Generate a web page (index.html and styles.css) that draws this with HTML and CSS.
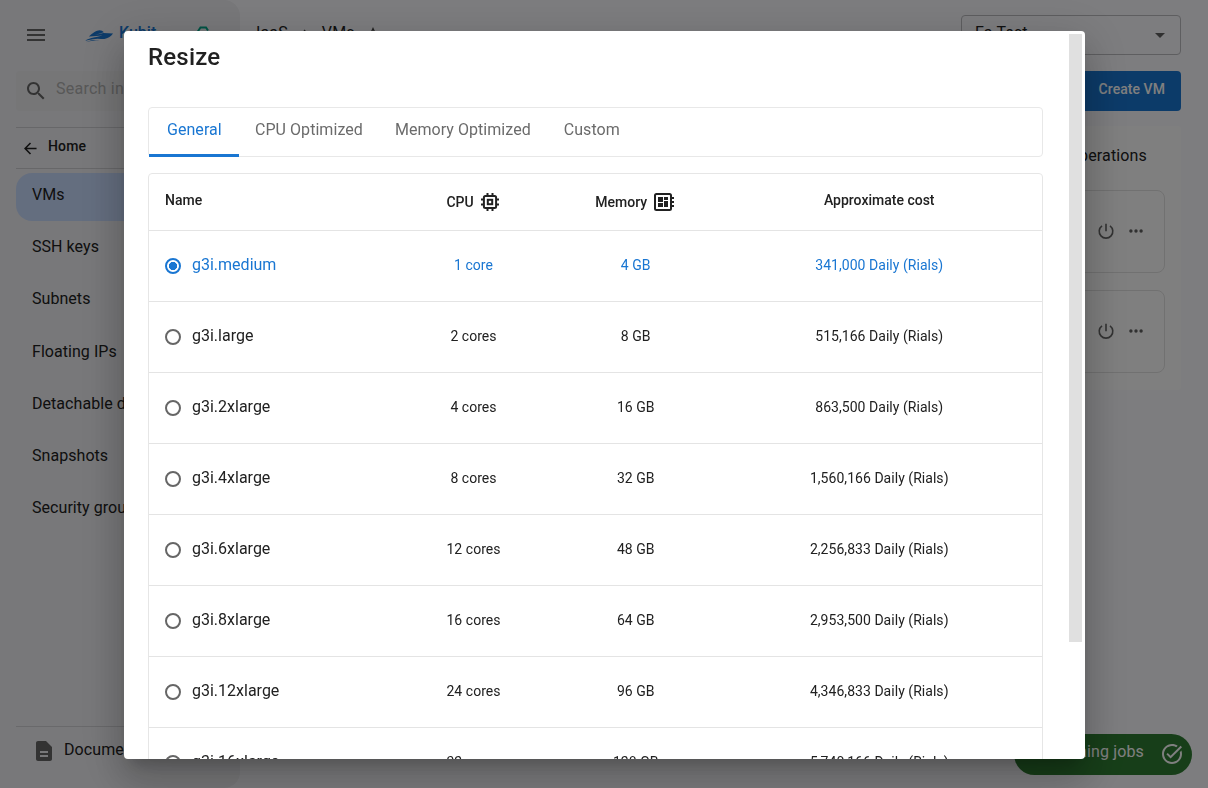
FILE: index.html
```html
<!DOCTYPE html>
<html lang="en">
<head>
<meta charset="utf-8">
<title>Kubit</title>
<link rel="stylesheet" href="styles.css">
</head>
<body>
<div class="app">
  <aside class="sidebar">
    <div class="brand">
      <svg class="menu" viewBox="0 0 24 24"><path d="M3 18h18v-2H3v2zm0-5h18v-2H3v2zm0-7v2h18V6H3z"/></svg>
      <svg class="boat" viewBox="0 0 30 14"><path d="M4 7.500C8 4 12 1 15 1c2 0 3.500.8 4.500 2L10 6l9-2.200 10 .7c-2.500 3.500-5.500 5.200-9 5.500-4 0-8-.8-12 .4L0 12c3-2 6-3 9-3.500 4-.6 6-1 9-2.300-4 .8-8 1-14 1.300z"/><path d="M1 13.500c5-2.500 9-2.500 14-2-5 0-9 .5-14 2z"/></svg>
      <span class="brand-name">Kubit</span>
      <svg class="badge-icon" viewBox="0 0 14 16"><path d="M12 4.500 10 1.500H4.500L1.500 6v5l3 3.500h5l3-3.500V6H5v5h4"/></svg>
    </div>
    <div class="search">
      <svg viewBox="0 0 24 24"><path d="M15.500 14h-.79l-.28-.27C15.410 12.590 16 11.110 16 9.500 16 5.910 13.090 3 9.500 3S3 5.910 3 9.500 5.910 16 9.500 16c1.610 0 3.090-.59 4.230-1.570l.27.28v.79l5 4.990L20.490 19l-4.990-5zm-6 0C7.010 14 5 11.990 5 9.500S7.010 5 9.500 5 14 7.010 14 9.500 11.990 14 9.500 14z"/></svg>
      <span>Search in</span>
    </div>
    <div class="home">
      <svg viewBox="0 0 14 14"><path d="M13.500 7H1.500M7 1 1.200 7 7 13"/></svg>
      <span>Home</span>
    </div>
    <nav class="nav">
      <a class="nav-item active">VMs</a>
      <a class="nav-item">SSH keys</a>
      <a class="nav-item">Subnets</a>
      <a class="nav-item">Floating IPs</a>
      <a class="nav-item">Detachable disks</a>
      <a class="nav-item">Snapshots</a>
      <a class="nav-item">Security groups</a>
    </nav>
    <div class="docs">
      <svg viewBox="0 0 24 24"><path d="M14 2H6c-1.100 0-2 .9-2 2v16c0 1.100.9 2 2 2h12c1.100 0 2-.9 2-2V8l-6-6zm2 16H8v-2h8v2zm0-4H8v-2h8v2z"/></svg>
      <span>Documents</span>
    </div>
  </aside>
  <main class="main">
    <header class="topbar">
      <div class="crumbs">
        <span>IaaS</span>
        <svg class="crumb-sep" viewBox="0 0 8 10"><path d="m2 1 4 4-4 4"/></svg>
        <span>VMs</span>
        <svg class="crumb-up" viewBox="0 0 8 10"><path d="m1 8 3-6.500L7 8"/></svg>
      </div>
      <div class="select"><span>Fa Test</span><svg viewBox="0 0 10 5"><path d="M0 0h10L5 5z"/></svg></div>
    </header>
    <div class="actions"><button class="create">Create VM</button></div>
    <section class="panel">
      <div class="panel-title">Operations</div>
      <div class="vm"><svg class="power" viewBox="0 0 16 16"><path d="M8 .8v7.400M4 2.800a6.800 6.800 0 1 0 8 0"/></svg><svg class="dots" viewBox="0 0 14 4"><circle cx="1.900" cy="2" r="1.700"/><circle cx="7" cy="2" r="1.700"/><circle cx="12.100" cy="2" r="1.700"/></svg></div>
      <div class="vm"><svg class="power" viewBox="0 0 16 16"><path d="M8 .8v7.400M4 2.800a6.800 6.800 0 1 0 8 0"/></svg><svg class="dots" viewBox="0 0 14 4"><circle cx="1.900" cy="2" r="1.700"/><circle cx="7" cy="2" r="1.700"/><circle cx="12.100" cy="2" r="1.700"/></svg></div>
    </section>
  </main>
</div>
<div class="jobs"><span>Running jobs</span><svg viewBox="0 0 24 24"><path d="M22 5.180 10.590 16.600l-4.240-4.240 1.410-1.410 2.830 2.830 10-10L22 5.180zm-2.210 5.040c.13.570.21 1.170.21 1.780 0 4.420-3.580 8-8 8s-8-3.580-8-8 3.580-8 8-8c1.580 0 3.040.46 4.280 1.250l1.440-1.440C16.100 2.670 14.130 2 12 2 6.480 2 2 6.480 2 12s4.480 10 10 10 10-4.480 10-10c0-1.190-.22-2.330-.6-3.390l-1.610 1.610z"/></svg></div>
<div class="backdrop"></div>
<div class="dialog" role="dialog">
  <div class="content">
    <h2 class="title">Resize</h2>
    <div class="tabs">
      <span class="tab selected">General</span>
      <span class="tab">CPU Optimized</span>
      <span class="tab">Memory Optimized</span>
      <span class="tab">Custom</span>
    </div>
    <div class="table">
      <div class="row head">
        <div class="cell">Name</div>
        <div class="cell icon-cell">CPU<svg class="cpu" viewBox="0 0 18 18"><rect x="2.900" y="2.900" width="12.200" height="12.200" rx="1.500"/><rect x="6.800" y="6.800" width="4.400" height="4.400"/><path d="M6.500 0v3M11.500 0v3M6.500 15v3M11.500 15v3M0 6.500h3M0 11.500h3M15 6.500h3M15 11.500h3"/></svg></div>
        <div class="cell icon-cell">Memory<svg class="memory" viewBox="0 0 20 18"><rect x="1" y="1" width="16" height="16" rx="1.500"/><path class="fill" d="M4 4h5v5H4zM10 4h4v3h-4zM4 10h5v4H4zM10 8h4v6h-4z"/><path d="M17 5h3M17 9h3M17 13h3"/></svg></div>
        <div class="cell">Approximate cost</div>
      </div>
      <div class="row chosen"><div class="cell name"><i class="radio"></i>g3i.medium</div><div class="cell">1 core</div><div class="cell">4 GB</div><div class="cell">341,000 Daily (Rials)</div></div>
      <div class="row"><div class="cell name"><i class="radio"></i>g3i.large</div><div class="cell">2 cores</div><div class="cell">8 GB</div><div class="cell">515,166 Daily (Rials)</div></div>
      <div class="row"><div class="cell name"><i class="radio"></i>g3i.2xlarge</div><div class="cell">4 cores</div><div class="cell">16 GB</div><div class="cell">863,500 Daily (Rials)</div></div>
      <div class="row"><div class="cell name"><i class="radio"></i>g3i.4xlarge</div><div class="cell">8 cores</div><div class="cell">32 GB</div><div class="cell">1,560,166 Daily (Rials)</div></div>
      <div class="row"><div class="cell name"><i class="radio"></i>g3i.6xlarge</div><div class="cell">12 cores</div><div class="cell">48 GB</div><div class="cell">2,256,833 Daily (Rials)</div></div>
      <div class="row"><div class="cell name"><i class="radio"></i>g3i.8xlarge</div><div class="cell">16 cores</div><div class="cell">64 GB</div><div class="cell">2,953,500 Daily (Rials)</div></div>
      <div class="row"><div class="cell name"><i class="radio"></i>g3i.12xlarge</div><div class="cell">24 cores</div><div class="cell">96 GB</div><div class="cell">4,346,833 Daily (Rials)</div></div>
      <div class="row"><div class="cell name"><i class="radio"></i>g3i.16xlarge</div><div class="cell">32 cores</div><div class="cell">128 GB</div><div class="cell">5,740,166 Daily (Rials)</div></div>
    </div>
  </div>
  <div class="scrollbar"></div>
</div>
</body>
</html>
```
FILE: styles.css
```css
* { box-sizing: border-box; }
body {
  margin: 0;
  height: 788px;
  overflow: hidden;
  background: #fbfbff;
  color: #212121;
  font-family: Roboto, "Liberation Sans", sans-serif;
  font-size: 16px;
  letter-spacing: 0.15px;
}
svg { display: block; flex: none; overflow: visible; }
.app { display: flex; height: 788px; }

.sidebar {
  display: flex;
  flex-direction: column;
  flex: none;
  width: 240px;
  padding: 0 16px;
  background: #f0f0f4;
  border-radius: 0 16px 16px 0;
}
.brand { display: flex; align-items: center; height: 71px; padding: 0 0 2px 8px; }
.menu { width: 24px; height: 24px; fill: #666; }
.boat { width: 29px; height: 14px; margin: 2px 0 0 37px; fill: #1976d2; }
.brand-name { margin: -4px 0 0 5px; font-weight: 500; color: #1976d2; letter-spacing: 0; }
.badge-icon { width: 14px; height: 16px; margin: -1px 0 0 40px; fill: none; stroke: #00a88a; stroke-width: 2; }
.search {
  display: flex;
  align-items: center;
  flex: none;
  height: 40px;
  padding-left: 8px;
  border-radius: 4px;
  background: #ececee;
  color: #b0b0b0;
}
.search svg { width: 24px; height: 24px; fill: #666; }
.search span { margin: -5px 0 0 8px; letter-spacing: 0.25px; }
.home {
  display: flex;
  align-items: center;
  flex: none;
  height: 42px;
  margin-top: 16px;
  padding-left: 8px;
  border-top: 1px solid #cfcfd3;
  border-bottom: 1px solid #cfcfd3;
  font-size: 14px;
  font-weight: 500;
}
.home svg { width: 13px; height: 13px; fill: none; stroke: #212121; stroke-width: 1.700; }
.home span { margin: -4px 0 0 11px; letter-spacing: 0.15px; }
.nav { display: flex; flex-direction: column; gap: 4.200px; padding-top: 4px; }
.nav-item { height: 48px; padding: 12px 16px; line-height: 19px; white-space: nowrap; letter-spacing: 0.05px; }
.active { border-radius: 16px; background: #c9dcff; }
.docs {
  display: flex;
  align-items: center;
  height: 62px;
  margin-top: auto;
  padding: 0 0 13px 16px;
  border-top: 1px solid #d2d2d6;
}
.docs svg { width: 24px; height: 24px; fill: #666; }
.docs span { margin: -3px 0 0 8px; letter-spacing: 0.1px; }

.main { flex: 1; padding: 15px 27px 0 16px; }
.topbar { display: flex; justify-content: space-between; height: 40px; }
.crumbs { display: flex; align-items: center; height: 34px; }
.crumb-sep, .crumb-up { width: 8px; height: 10px; fill: none; stroke: #444; stroke-width: 1.300; }
.crumb-sep { margin: 4px 12px 0 14px; }
.crumb-up { margin-left: 14px; }
.select {
  display: flex;
  justify-content: space-between;
  align-items: center;
  width: 220px;
  padding: 0 15px 0 13px;
  border: 1px solid #bcbcc0;
  border-radius: 4px;
}
.select span { margin-top: -5px; }
.select svg { width: 10px; height: 5px; fill: #606060; }
.actions { display: flex; justify-content: flex-end; margin-top: 16px; }
.create {
  width: 112px;
  height: 40px;
  padding: 0 16px 4px 0;
  border: 0;
  border-radius: 4px;
  background: #1976d2;
  color: #fff;
  font: 500 14px Roboto, sans-serif;
  letter-spacing: 0.05px;
  text-align: right;
}
.panel { height: 264px; margin-top: 15px; padding: 20px 16px 0; border-radius: 4px; background: #fff; }
.panel-title { height: 44px; padding-right: 18px; text-align: right; line-height: 19px; }
.vm {
  display: flex;
  align-items: center;
  justify-content: flex-end;
  gap: 15px;
  height: 83px;
  margin-bottom: 17px;
  padding: 0 21px 2px 0;
  border: 1px solid #e2e2e2;
  border-radius: 8px;
}
.power { width: 16px; height: 16px; fill: none; stroke: #666; stroke-width: 1.600; }
.dots { width: 14px; height: 4px; fill: #606060; }
.jobs {
  position: fixed;
  right: 16px;
  bottom: 13.500px;
  display: flex;
  justify-content: flex-end;
  align-items: center;
  gap: 16px;
  width: 178px;
  height: 41px;
  padding-right: 8px;
  border-radius: 21px;
  background: #2e7d32;
  color: #fff;
}
.jobs span { margin-top: -5px; }
.jobs svg { width: 24px; height: 24px; fill: #fff; }

.backdrop { position: fixed; inset: 0; background: rgba(0, 0, 0, 0.5); }
.dialog {
  position: fixed;
  left: 124px;
  top: 31px;
  display: flex;
  width: 961px;
  height: 728px;
  overflow: hidden;
  border-radius: 4px;
  background: #fff;
  box-shadow: 0 11px 15px -7px rgba(0, 0, 0, 0.2), 0 24px 38px 3px rgba(0, 0, 0, 0.14), 0 9px 46px 8px rgba(0, 0, 0, 0.12);
}
.content { width: 918.500px; padding-left: 24px; }
.scrollbar { width: 13px; height: 608px; margin: 3px 3px 0 auto; background: #e0e0e0; }
.title { margin: 0; height: 76px; padding-top: 12px; font-size: 24px; font-weight: 500; line-height: 28px; letter-spacing: 0.2px; }
.tabs { display: flex; height: 50px; border: 1px solid #e8e8e8; border-radius: 4px; color: #6b6b6b; }
.tab { height: 49px; padding: 12px 16px; line-height: 19px; white-space: nowrap; letter-spacing: 0.05px; }
.tab:last-child { padding-left: 17px; }
.selected { width: 90px; padding-left: 18px; border-bottom: 3px solid #1976d2; color: #1976d2; }
.table { margin-top: 16px; border: 1px solid #e6e6e6; border-radius: 4px; }
.row {
  display: grid;
  grid-template-columns: 243.500px 162px 162.500px 1fr;
  height: 71px;
  padding-bottom: 2px;
  align-items: center;
  border-bottom: 1px solid #e4e4e4;
  font-size: 14px;
  letter-spacing: 0.04px;
}
.head { height: 57px; padding-bottom: 4px; font-weight: 500; letter-spacing: 0; }
.cell { text-align: center; }
.cell:first-child { padding-left: 16px; text-align: left; }
.icon-cell { display: flex; align-items: center; justify-content: center; gap: 7px; padding: 3px 2px 0 0; }
.icon-cell svg { fill: none; stroke: #212121; stroke-width: 2; }
.cpu { width: 18px; height: 18px; }
.memory { width: 20px; height: 18px; }
.icon-cell .fill { fill: #212121; stroke: none; }
.name { display: flex; align-items: center; padding-bottom: 2px; font-size: 16px; letter-spacing: 0; }
.radio { width: 16px; height: 16px; margin: 4px 11px 0 0; border: 2px solid #666; border-radius: 50%; }
.chosen { color: #1976d2; }
.chosen .radio { border-color: #1976d2; background: radial-gradient(circle, #1976d2 3.800px, transparent 4.400px); }
```
